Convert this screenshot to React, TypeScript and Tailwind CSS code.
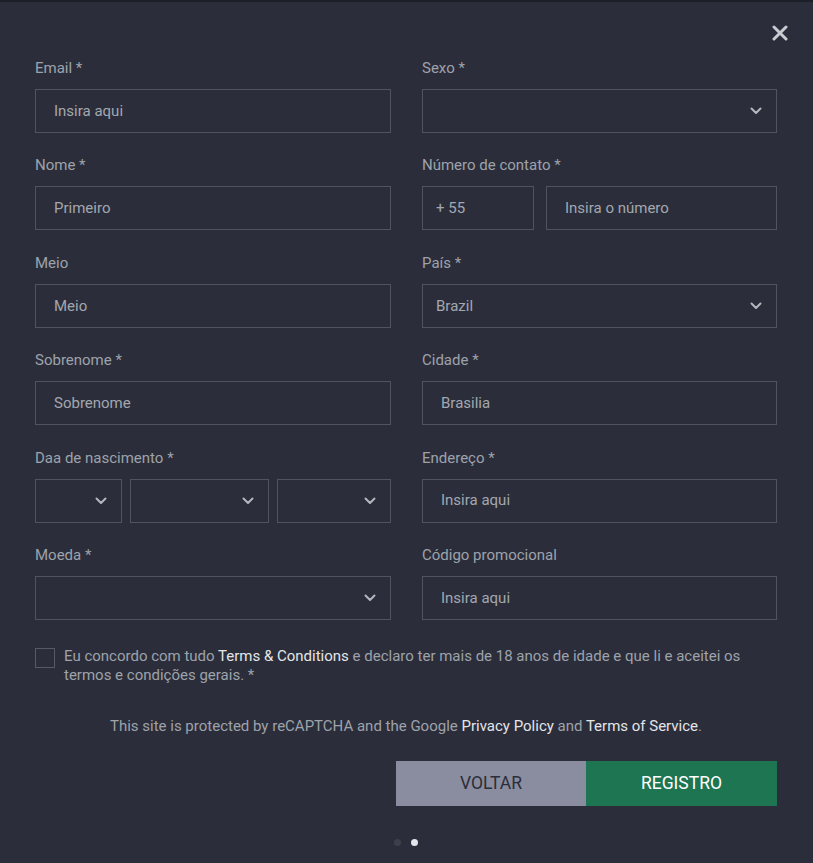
import React from "react";

const font = { fontFamily: "Roboto, 'Liberation Sans', Arial, sans-serif" };

function Chevron() {
  return (
    <svg width="12" height="8" viewBox="0 0 12 8" className="shrink-0">
      <path d="M1.5 1.5 L6 6 L10.5 1.5" fill="none" stroke="#b4b7bf" strokeWidth="2" strokeLinecap="round" strokeLinejoin="round" />
    </svg>
  );
}

function Label({ children }: { children: React.ReactNode }) {
  return <div className="text-[15px] leading-[20px] text-[#9ea2ab] mb-[11px]">{children}</div>;
}

function Input({ text, pl = "pl-[18px]", className = "" }: { text?: string; pl?: string; className?: string }) {
  return (
    <div className={`h-[44px] border border-[#4f5461] flex items-center ${pl} text-[15px] text-[#a3a7b0] ${className}`}>
      {text}
    </div>
  );
}

function Select({ text, className = "", pl = "pl-[13px]", pr = "pr-[14px]" }: { text?: string; className?: string; pl?: string; pr?: string }) {
  return (
    <div className={`h-[44px] border border-[#4f5461] flex items-center justify-between ${pl} ${pr} text-[15px] text-[#a3a7b0] ${className}`}>
      <span>{text}</span>
      <Chevron />
    </div>
  );
}

function Field({ label, children }: { label: React.ReactNode; children: React.ReactNode }) {
  return (
    <div>
      <Label>{label}</Label>
      {children}
    </div>
  );
}

export default function App() {
  return (
    <div style={font} className="w-[813px] h-[863px] bg-[#2b2e3a] border-t-2 border-[#1c1f27] relative overflow-hidden">
      <button className="absolute right-[24px] top-[22px] w-[18px] h-[18px] flex items-center justify-center">
        <svg width="16" height="16" viewBox="0 0 16 16">
          <path d="M2 2 L14 14 M14 2 L2 14" stroke="#c9cbd1" strokeWidth="3" strokeLinecap="round" />
        </svg>
      </button>
      <div className="pl-[35px] pr-[36px] pt-[56px]">
        <div className="grid grid-cols-[356px_355px] gap-x-[31px] gap-y-[22.4px]">
          <Field label="Email *"><Input text="Insira aqui" /></Field>
          <Field label="Sexo *"><Select /></Field>

          <Field label="Nome *"><Input text="Primeiro" /></Field>
          <Field label="Número de contato *">
            <div className="flex gap-[12px]">
              <Input text="+ 55" pl="pl-[13px]" className="w-[112px]" />
              <Input text="Insira o número" className="flex-1" />
            </div>
          </Field>

          <Field label="Meio"><Input text="Meio" /></Field>
          <Field label="País *"><Select text="Brazil" /></Field>

          <Field label="Sobrenome *"><Input text="Sobrenome" /></Field>
          <Field label="Cidade *"><Input text="Brasilia" /></Field>

          <Field label="Daa de nascimento *">
            <div className="flex gap-[8px]">
              <Select className="w-[87px]" />
              <Select className="w-[139px]" />
              <Select className="flex-1" />
            </div>
          </Field>
          <Field label="Endereço *"><Input text="Insira aqui" /></Field>

          <Field label="Moeda *"><Select /></Field>
          <Field label="Código promocional"><Input text="Insira aqui" /></Field>
        </div>

        <div className="flex gap-[9px] mt-[27px]">
          <div className="w-[20px] h-[20px] border border-[#555a66] shrink-0 mt-[1px]"></div>
          <p className="text-[15px] leading-[19px] text-[#9ea2ab] pr-[20px]">
            Eu concordo com tudo <span className="text-[#e4e5e9]">Terms &amp; Conditions</span> e declaro ter mais de 18 anos de idade e que li e aceitei os termos e condições gerais. *
          </p>
        </div>

        <p className="text-center text-[15px] leading-[20px] text-[#9ea2ab] mt-[31px]">
          This site is protected by reCAPTCHA and the Google <span className="text-[#e4e5e9]">Privacy Policy</span> and <span className="text-[#e4e5e9]">Terms of Service</span>.
        </p>

        <div className="flex justify-end mt-[25px]">
          <button className="w-[190px] h-[45px] bg-[#8a8d9f] text-[#2b2e3a] text-[17.5px]">VOLTAR</button>
          <button className="w-[191px] h-[45px] bg-[#1d7552] text-white text-[17.5px]">REGISTRO</button>
        </div>

        <div className="flex justify-center items-center gap-[10px] mt-[33px]">
          <span className="w-[7px] h-[7px] rounded-full bg-[#3c404c]"></span>
          <span className="w-[7px] h-[7px] rounded-full bg-[#e4e5ea]"></span>
        </div>
      </div>
    </div>
  );
}
